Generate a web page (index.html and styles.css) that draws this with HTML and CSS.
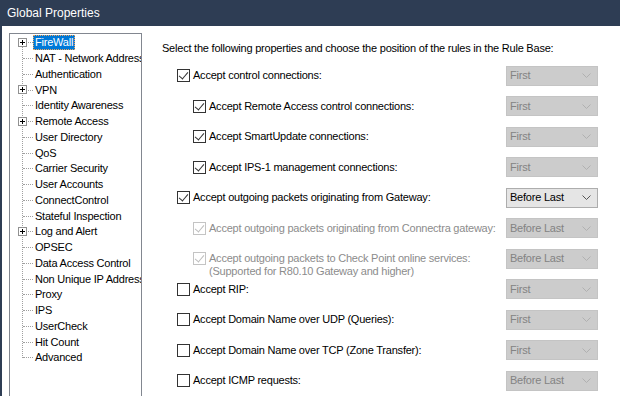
FILE: index.html
```html
<!DOCTYPE html>
<html>
<head>
<meta charset="utf-8">
<link rel="stylesheet" href="styles.css">
</head>
<body>
<div class="window">
  <div class="titlebar">Global Properties</div>
  <div class="content">
    <div class="tree">
      <ul class="tree-list">
        <li class="node has-children"><span class="plus"></span><span class="label selected">FireWall</span></li>
        <li class="node"><span class="label">NAT - Network Address Translation</span></li>
        <li class="node"><span class="label">Authentication</span></li>
        <li class="node has-children"><span class="plus"></span><span class="label">VPN</span></li>
        <li class="node"><span class="label">Identity Awareness</span></li>
        <li class="node has-children"><span class="plus"></span><span class="label">Remote Access</span></li>
        <li class="node"><span class="label">User Directory</span></li>
        <li class="node"><span class="label">QoS</span></li>
        <li class="node"><span class="label">Carrier Security</span></li>
        <li class="node"><span class="label">User Accounts</span></li>
        <li class="node"><span class="label">ConnectControl</span></li>
        <li class="node"><span class="label">Stateful Inspection</span></li>
        <li class="node has-children"><span class="plus"></span><span class="label">Log and Alert</span></li>
        <li class="node"><span class="label">OPSEC</span></li>
        <li class="node"><span class="label">Data Access Control</span></li>
        <li class="node"><span class="label">Non Unique IP Address Ranges</span></li>
        <li class="node"><span class="label">Proxy</span></li>
        <li class="node"><span class="label">IPS</span></li>
        <li class="node"><span class="label">UserCheck</span></li>
        <li class="node"><span class="label">Hit Count</span></li>
        <li class="node"><span class="label">Advanced</span></li>
      </ul>
    </div>
    <div class="panel">
      <div class="intro">Select the following properties and choose the position of the rules in the Rule Base:</div>
      <div class="rows">
        <div class="row">
          <label class="opt lvl1"><span class="cb checked"></span><span class="txt">Accept control connections:</span></label>
          <div class="combo disabled"><span>First</span><svg width="9" height="5" viewBox="0 0 9 5"><polyline points="0.5,0.5 4.5,4.5 8.5,0.5"/></svg></div>
        </div>
        <div class="row">
          <label class="opt lvl2"><span class="cb checked"></span><span class="txt">Accept Remote Access control connections:</span></label>
          <div class="combo disabled"><span>First</span><svg width="9" height="5" viewBox="0 0 9 5"><polyline points="0.5,0.5 4.5,4.5 8.5,0.5"/></svg></div>
        </div>
        <div class="row">
          <label class="opt lvl2"><span class="cb checked"></span><span class="txt">Accept SmartUpdate connections:</span></label>
          <div class="combo disabled"><span>First</span><svg width="9" height="5" viewBox="0 0 9 5"><polyline points="0.5,0.5 4.5,4.5 8.5,0.5"/></svg></div>
        </div>
        <div class="row">
          <label class="opt lvl2"><span class="cb checked"></span><span class="txt">Accept IPS-1 management connections:</span></label>
          <div class="combo disabled"><span>First</span><svg width="9" height="5" viewBox="0 0 9 5"><polyline points="0.5,0.5 4.5,4.5 8.5,0.5"/></svg></div>
        </div>
        <div class="row">
          <label class="opt lvl1"><span class="cb checked"></span><span class="txt">Accept outgoing packets originating from Gateway:</span></label>
          <div class="combo"><span>Before Last</span><svg width="9" height="5" viewBox="0 0 9 5"><polyline points="0.5,0.5 4.5,4.5 8.5,0.5"/></svg></div>
        </div>
        <div class="row">
          <label class="opt lvl2 off"><span class="cb checked"></span><span class="txt">Accept outgoing packets originating from Connectra gateway:</span></label>
          <div class="combo disabled"><span>Before Last</span><svg width="9" height="5" viewBox="0 0 9 5"><polyline points="0.5,0.5 4.5,4.5 8.5,0.5"/></svg></div>
        </div>
        <div class="row">
          <label class="opt lvl2 off"><span class="cb checked"></span><span class="txt">Accept outgoing packets to Check Point online services:<br>(Supported for R80.10 Gateway and higher)</span></label>
          <div class="combo disabled"><span>Before Last</span><svg width="9" height="5" viewBox="0 0 9 5"><polyline points="0.5,0.5 4.5,4.5 8.5,0.5"/></svg></div>
        </div>
        <div class="row">
          <label class="opt lvl1"><span class="cb"></span><span class="txt">Accept RIP:</span></label>
          <div class="combo disabled"><span>First</span><svg width="9" height="5" viewBox="0 0 9 5"><polyline points="0.5,0.5 4.5,4.5 8.5,0.5"/></svg></div>
        </div>
        <div class="row">
          <label class="opt lvl1"><span class="cb"></span><span class="txt">Accept Domain Name over UDP (Queries):</span></label>
          <div class="combo disabled"><span>First</span><svg width="9" height="5" viewBox="0 0 9 5"><polyline points="0.5,0.5 4.5,4.5 8.5,0.5"/></svg></div>
        </div>
        <div class="row">
          <label class="opt lvl1"><span class="cb"></span><span class="txt">Accept Domain Name over TCP (Zone Transfer):</span></label>
          <div class="combo disabled"><span>First</span><svg width="9" height="5" viewBox="0 0 9 5"><polyline points="0.5,0.5 4.5,4.5 8.5,0.5"/></svg></div>
        </div>
        <div class="row">
          <label class="opt lvl1"><span class="cb"></span><span class="txt">Accept ICMP requests:</span></label>
          <div class="combo disabled"><span>Before Last</span><svg width="9" height="5" viewBox="0 0 9 5"><polyline points="0.5,0.5 4.5,4.5 8.5,0.5"/></svg></div>
        </div>
      </div>
    </div>
  </div>
</div>
</body>
</html>
```

FILE: styles.css
```css
* { box-sizing: border-box; }
html, body { margin: 0; padding: 0; background: #fff; }
body {
  width: 620px;
  height: 396px;
  overflow: hidden;
  font-family: "Liberation Sans", Arial, sans-serif;
  font-size: 11px;
  letter-spacing: -0.22px;
  color: #000;
}
.window {
  height: 396px;
  border-left: 2px solid #2e3d54;
  display: flex;
  flex-direction: column;
  background: #fff;
}
.titlebar {
  height: 26px;
  flex: none;
  background: #2e3d54;
  color: #fff;
  font-size: 12px;
  letter-spacing: 0;
  line-height: 26px;
  padding-left: 5px;
}
.content {
  flex: 1;
  display: flex;
  padding: 7px 0 0 7px;
  min-height: 0;
}
.tree {
  flex: none;
  width: 133px;
  height: 380px;
  border: 1px solid #828790;
  overflow: hidden;
  padding: 1px 0 0 12px;
}
.tree-list {
  list-style: none;
  margin: 0;
  padding: 0;
  position: relative;
}
.tree-list::before {
  content: "";
  position: absolute;
  left: 0;
  top: 8px;
  height: 315px;
  border-left: 1px dotted #a0a0a0;
}
.node {
  height: 15.75px;
  display: flex;
  align-items: center;
  position: relative;
  white-space: nowrap;
}
.node::before {
  content: "";
  flex: none;
  width: 10px;
  margin-left: 1px;
  border-top: 1px dotted #a0a0a0;
}
.plus {
  position: absolute;
  left: -4px;
  top: 3px;
  width: 9px;
  height: 9px;
  border: 1px solid #919191;
  background: #fff;
  z-index: 1;
}
.plus::before {
  content: "";
  position: absolute;
  left: 1px;
  top: 3px;
  width: 5px;
  height: 1px;
  background: #000;
}
.plus::after {
  content: "";
  position: absolute;
  left: 3px;
  top: 1px;
  width: 1px;
  height: 5px;
  background: #000;
}
.label {
  padding: 0 1px;
  line-height: 13px;
  border: 1px solid transparent;
}
.label.selected {
  background: #0078d7;
  color: #fff;
  border: 1px dotted #f2a65a;
}
.panel {
  flex: none;
  width: 436px;
  margin-left: 20px;
  padding-top: 9px;
}
.intro {
  line-height: 13px;
  white-space: nowrap;
}
.rows {
  margin-top: 10.5px;
  display: flex;
  flex-direction: column;
  gap: 10.55px;
}
.row {
  height: 20px;
  display: flex;
  align-items: flex-start;
}
.opt {
  flex: 1;
  min-width: 0;
  display: flex;
  align-items: flex-start;
  padding-top: 3.5px;
  line-height: 13px;
  white-space: nowrap;
}
.lvl1 { padding-left: 15px; }
.lvl2 { padding-left: 31px; }
.cb {
  flex: none;
  width: 13px;
  height: 13px;
  border: 1px solid #333;
  background: #fff;
  margin-right: 3px;
  position: relative;
}
.cb.checked::after {
  content: "";
  position: absolute;
  left: 3px;
  top: 0px;
  width: 4px;
  height: 8px;
  border-right: 1px solid #333;
  border-bottom: 1px solid #333;
  transform: rotate(40deg);
}
.opt.off { color: #8c8c8c; }
.opt.off .cb { border-color: #c4c4c4; }
.opt.off .cb.checked::after { border-color: #bdbdbd; }
.combo {
  flex: none;
  width: 92px;
  height: 20px;
  border: 1px solid #adadad;
  background: #e5e5e5;
  display: flex;
  align-items: center;
  justify-content: space-between;
  padding: 0 6px 0 3px;
  line-height: 13px;
}
.combo svg { fill: none; stroke: #555; stroke-width: 1; }
.combo.disabled {
  background: #cccccc;
  border-color: #c4c4c4;
  color: #838383;
}
.combo.disabled svg { stroke: #b0b0b0; }
```
